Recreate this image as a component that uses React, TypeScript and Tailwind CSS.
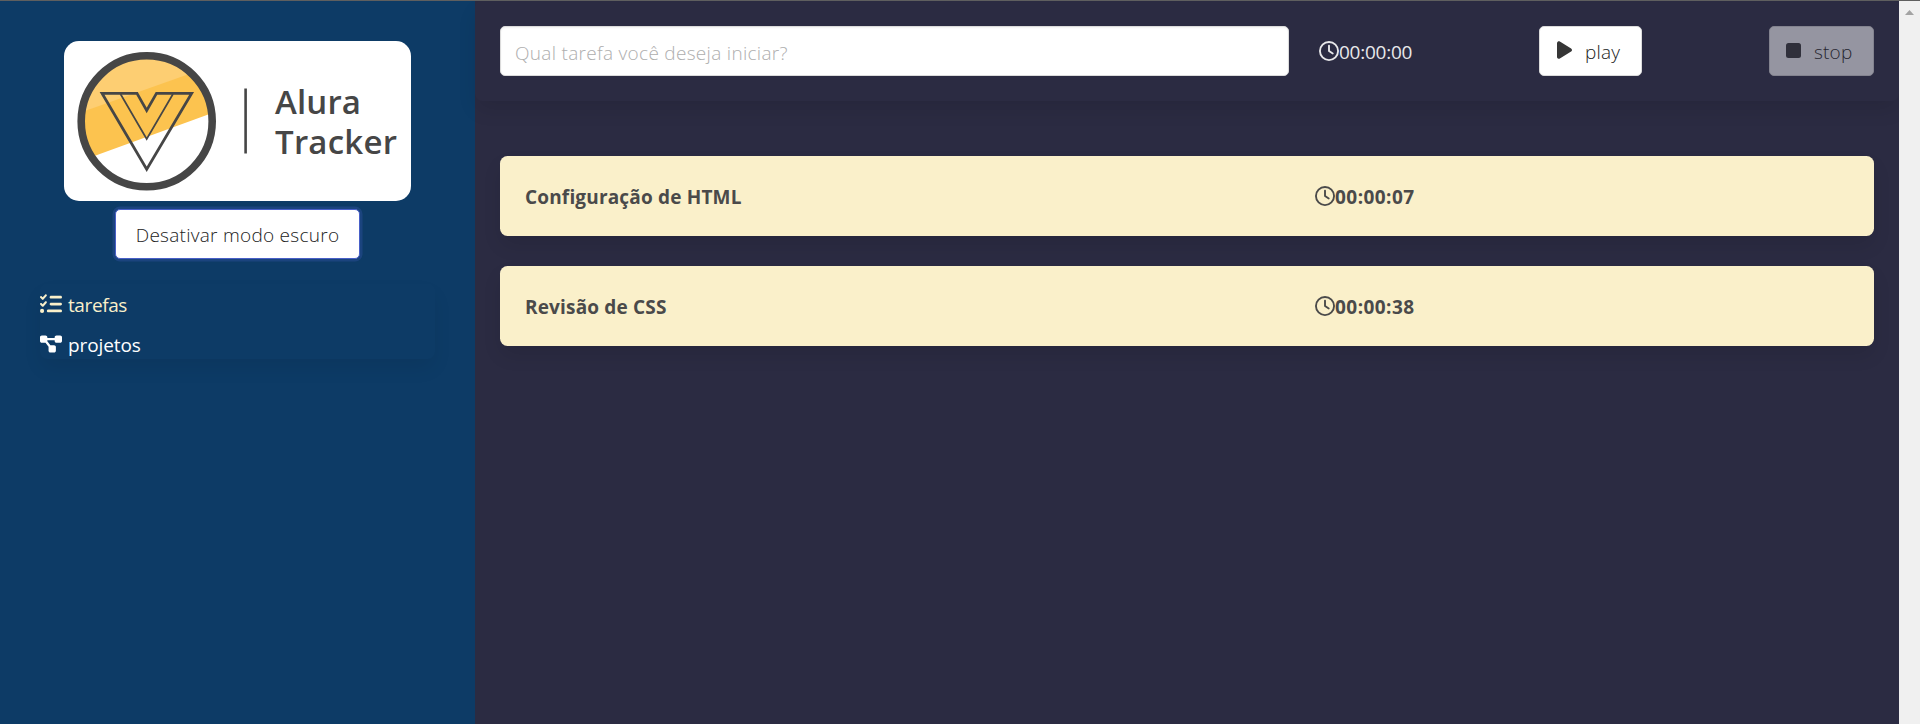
import React from "react";
import { FaListCheck, FaDiagramProject, FaPlay, FaRegClock } from "react-icons/fa6";

function Logo() {
  return (
    <svg width="347" height="160" viewBox="0 0 347 160" className="block">
      <defs>
        <clipPath id="disc"><circle cx="82.7" cy="80.3" r="64" /></clipPath>
      </defs>
      <rect width="347" height="160" rx="15" fill="#fff" />
      <g clipPath="url(#disc)">
        <path d="M0 0H170V64L0 126Z" fill="#fcc34f" />
        <path d="M0 0H170V17L0 77.5Z" fill="#fdce72" />
      </g>
      <circle cx="82.7" cy="80.3" r="65.5" fill="none" stroke="#464646" strokeWidth="7.6" />
      <g fill="none" stroke="#464646" strokeLinejoin="miter">
        <path d="M38 52.3H73L82.7 69.5L92.5 52.3H127.7L82.7 128.3Z" strokeWidth="2.7" />
        <path d="M56.5 53L82.7 98L109 53" strokeWidth="1.7" />
      </g>
      <path d="M181.6 47.5V112.5" stroke="#464646" strokeWidth="2.6" />
      <text fontFamily="Open Sans, Noto Sans, sans-serif" fontWeight="600" fontSize="33" fill="#464646">
        <tspan x="211" y="72.5" textLength="86">Alura</tspan>
        <tspan x="211" y="112.5" textLength="122">Tracker</tspan>
      </text>
    </svg>
  );
}

function Task({ name, time }: { name: string; time: string }) {
  return (
    <article className="flex h-20 items-center rounded-[7.5px] bg-[#faf0ca] pl-[25px] font-bold text-[#4a4a4a] shadow-[0_10px_20px_-2.5px_rgba(10,10,10,0.1)]">
      <div className="w-[790px] pt-0.5 tracking-[0.17px]">{name}</div>
      <div className="flex items-center">
        <FaRegClock className="size-5" />
        <span className="pt-0.5 tracking-[0.45px]">{time}</span>
      </div>
    </article>
  );
}

export default function App() {
  return (
    <div className="flex h-[724px] w-[1920px] overflow-hidden border-t border-[#5f5f5f] bg-[#2b2b42] font-['Open_Sans','Noto_Sans',sans-serif] text-[19px] leading-[30px]">
      <aside className="w-[475px] shrink-0 bg-[#0d3b66] px-10 pt-10">
        <div className="flex flex-col items-center">
          <Logo />
          <button className="mt-2 h-[50px] w-[245px] rounded-[5px] border border-[#485fc7] bg-white pt-0.5 text-[#222222] shadow-[0_0_0_2.5px_rgba(72,95,199,0.25)]">
            <span className="whitespace-nowrap font-light tracking-[0.27px]">Desativar modo escuro</span>
          </button>
        </div>
        <nav className="mt-[25px] h-[75px] rounded-[7.5px] pt-1.5 shadow-[0_10px_20px_-2.5px_rgba(10,10,10,0.08)]">
          <ul className="flex flex-col gap-2.5 text-white">
            <li className="flex items-center text-[#faf0ca]">
              <FaListCheck className="mb-0.5 mr-1.5 size-[22px]" />
              <span className="tracking-[-0.4px]">tarefas</span>
            </li>
            <li className="flex items-center">
              <FaDiagramProject className="mb-0.5 mr-1.5 size-[22px]" />
              <span className="tracking-[-0.1px]">projetos</span>
            </li>
          </ul>
        </nav>
      </aside>
      <main className="w-[1424px] shrink-0">
        <header className="flex h-[100px] items-start rounded-[7.5px] px-[25px] pt-[25px] shadow-[0_10px_20px_-2.5px_rgba(10,10,10,0.1)]">
          <input
            className="h-[50px] w-[789px] rounded-[5px] border border-[#dbdbdb] bg-white px-3.5 pt-[3px] font-light tracking-[0.3px] shadow-[inset_0_1px_2px_rgba(10,10,10,0.05)] placeholder:text-[#aeaeae]"
            placeholder="Qual tarefa você deseja iniciar?"
          />
          <div className="ml-[30px] flex h-[50px] w-[220px] items-center text-[#e8e8ea]">
            <FaRegClock className="size-5" />
            <span className="pt-0.5 tracking-[-0.25px]">00:00:00</span>
          </div>
          <button className="flex h-[50px] w-[103px] items-center rounded-[5px] border border-[#dbdbdb] bg-white pl-4 font-light text-[#222222]">
            <FaPlay className="mb-0.5 mr-3 h-[20px] w-[17px] text-[#363636]" />
            <span className="pt-0.5 tracking-[0.2px]">play</span>
          </button>
          <button disabled className="ml-[127px] flex h-[50px] w-[105px] items-center rounded-[5px] border border-[#dbdbdb] bg-white pl-4 font-light text-[#222222] opacity-50">
            <span className="mb-0.5 mr-[13px] size-[15px] rounded-[2.5px] bg-[#363636]" />
            <span className="pt-0.5 tracking-[0.2px]">stop</span>
          </button>
        </header>
        <section className="flex flex-col gap-[30px] px-[25px] pt-[55px]">
          <Task name="Configuração de HTML" time="00:00:07" />
          <Task name="Revisão de CSS" time="00:00:38" />
        </section>
      </main>
      <div className="flex w-[21px] justify-center bg-[#f0f0f0] pt-[9px]">
        <svg width="9" height="5" viewBox="0 0 9 5"><path d="M0 5L4.5 0L9 5Z" fill="#a3a3a3" /></svg>
      </div>
    </div>
  );
}
